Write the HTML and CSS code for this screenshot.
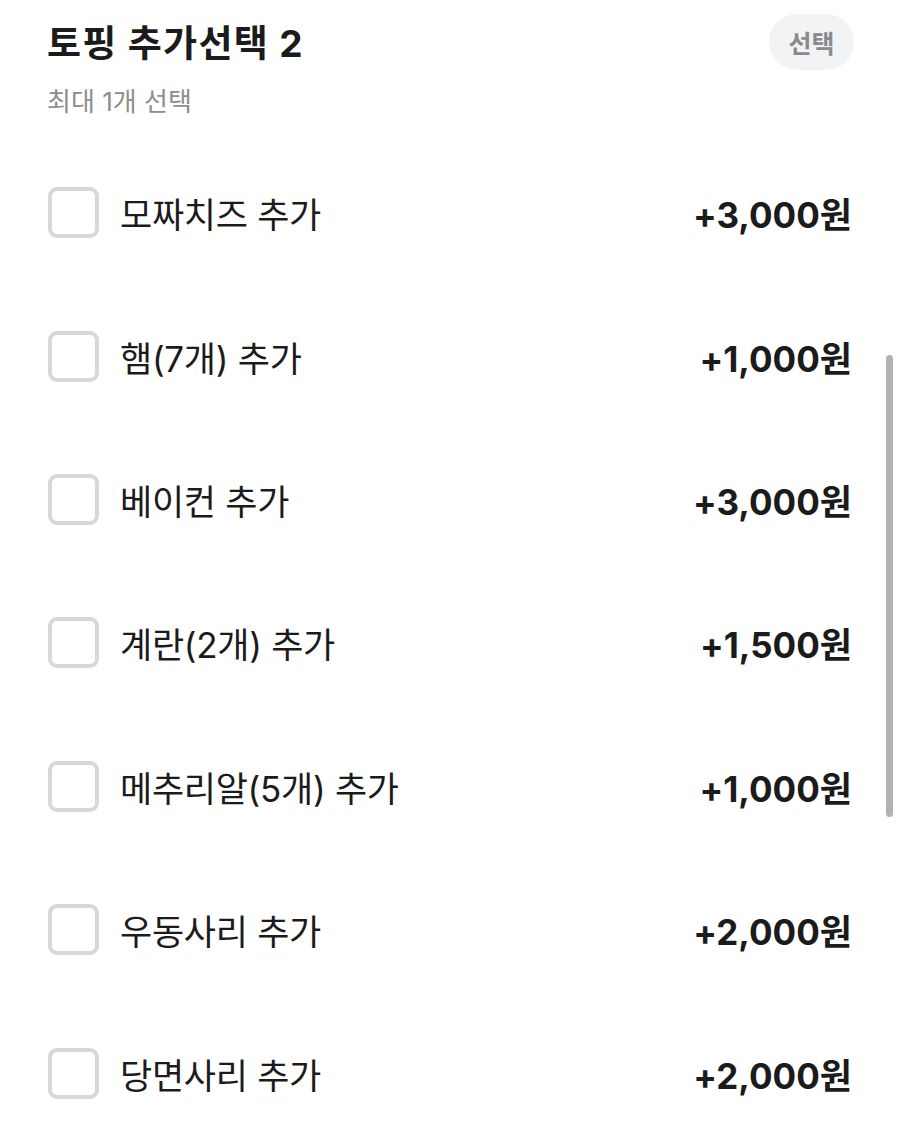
FILE: index.html
```html
<!DOCTYPE html>
<html lang="ko">
<head>
<meta charset="utf-8">
<title>토핑 추가선택 2</title>
<link rel="stylesheet" href="styles.css">
</head>
<body>
<main class="sheet">
  <header class="group-head">
    <div class="group-titles">
      <h2 class="group-title">토핑 추가선택 2</h2>
      <p class="group-rule">최대 1개 선택</p>
    </div>
    <span class="badge">선택</span>
  </header>

  <ul class="options">
    <li class="option"><span class="check"></span><span class="name">모짜치즈 추가</span><span class="price">+3,000원</span></li>
    <li class="option"><span class="check"></span><span class="name">햄(7개) 추가</span><span class="price">+1,000원</span></li>
    <li class="option"><span class="check"></span><span class="name">베이컨 추가</span><span class="price">+3,000원</span></li>
    <li class="option"><span class="check"></span><span class="name">계란(2개) 추가</span><span class="price">+1,500원</span></li>
    <li class="option"><span class="check"></span><span class="name">메추리알(5개) 추가</span><span class="price">+1,000원</span></li>
    <li class="option"><span class="check"></span><span class="name">우동사리 추가</span><span class="price">+2,000원</span></li>
    <li class="option"><span class="check"></span><span class="name">당면사리 추가</span><span class="price">+2,000원</span></li>
  </ul>

  <div class="scroll-thumb"></div>
</main>
</body>
</html>
```
FILE: styles.css
```css
* { box-sizing: border-box; }

html, body {
  margin: 0;
  background: #ffffff;
}

body {
  font-family: "Inter", "Noto Sans CJK KR", "Noto Sans", sans-serif;
  color: #1b1b1b;
}

.sheet {
  position: relative;
  width: 900px;
  height: 1133px;
  overflow: hidden;
  padding: 14px 48px 0 47px;
}

.group-head {
  display: flex;
  justify-content: space-between;
  align-items: flex-start;
}

.group-title {
  margin: 0;
  font-size: 37px;
  font-weight: 700;
  line-height: 60px;
  letter-spacing: 1.3px;
  color: #1b1b1b;
}

.group-rule {
  margin: 10px 0 0;
  font-size: 26px;
  line-height: 36px;
  color: #8d8d8d;
  letter-spacing: 0;
}

.badge {
  display: flex;
  align-items: center;
  justify-content: center;
  width: 85px;
  height: 56px;
  margin: 0 -2px 0 0;
  border-radius: 28px;
  background: #f2f3f5;
  color: #8a8a8e;
  font-size: 25px;
  font-weight: 700;
}

.options {
  list-style: none;
  margin: 21px 0 0;
  padding: 0;
}

.option {
  display: flex;
  align-items: center;
  height: 143.4px;
}

.check {
  flex: none;
  width: 51px;
  height: 51px;
  border: 4px solid #d8d8da;
  border-radius: 9px;
  margin: 0 21px 0 1px;
}

.name {
  flex: 1;
  font-size: 35px;
  letter-spacing: -0.3px;
  color: #1b1b1b;
}

.price {
  font-size: 35px;
  font-weight: 700;
  letter-spacing: 0;
  color: #1b1b1b;
}

.scroll-thumb {
  position: absolute;
  left: 886px;
  top: 355px;
  width: 7px;
  height: 462px;
  border-radius: 4px;
  background: #b2b2b2;
}
```
